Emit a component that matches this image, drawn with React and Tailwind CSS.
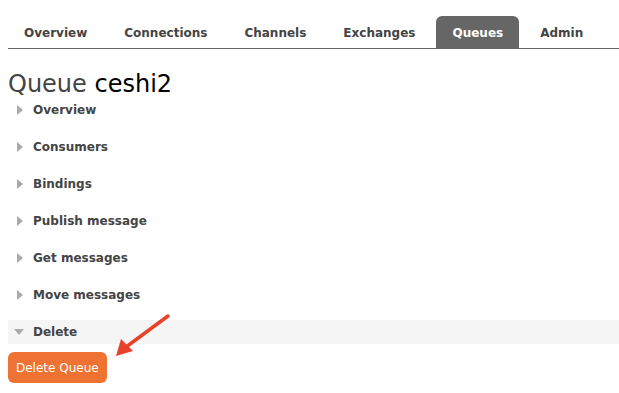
const tabs = ["Overview", "Connections", "Channels", "Exchanges", "Queues", "Admin"];
const sections = ["Overview", "Consumers", "Bindings", "Publish message", "Get messages", "Move messages"];

const App = () => {
  return (
    <div className="w-[619px] h-[393px] bg-white relative overflow-hidden font-['DejaVu_Sans',sans-serif] text-[#444]">
      <div className="ml-2 mt-4 flex gap-[5px] border-b border-[#666]">
        {tabs.map((t) => (
          <div
            key={t}
            className={
              t === "Queues"
                ? "h-8 px-4 pt-px flex items-center rounded-t-md bg-[#666] text-white text-[12px] font-bold"
                : "h-8 px-4 pt-px flex items-center text-[12px] font-bold"
            }
          >
            {t}
          </div>
        ))}
      </div>

      <h1 className="ml-2 mt-[20px] text-[24px] leading-[30px] text-[#444]">
        Queue <span className="text-black">ceshi2</span>
      </h1>

      <div className="ml-2 flex flex-col gap-[13px] -mt-px">
        {sections.map((s) => (
          <div key={s} className="h-6 flex items-center text-[12px] font-bold">
            <span className="ml-[9px] w-0 h-0 border-y-[5px] border-y-transparent border-l-[6px] border-l-[#aaa]" />
            <span className="ml-[10px]">{s}</span>
          </div>
        ))}
        <div className="h-6 flex items-center bg-[#f5f5f5] text-[12px] font-bold">
          <span className="ml-[6px] w-0 h-0 border-x-[5px] border-x-transparent border-t-[6px] border-t-[#aaa]" />
          <span className="ml-[9px]">Delete</span>
        </div>
      </div>

      <button className="ml-2 mt-2 h-[31px] px-2 rounded-md bg-[#ee7232] text-white text-[12px]">
        Delete Queue
      </button>

      <svg className="absolute left-0 top-0" width="619" height="393">
        <line x1="168" y1="316" x2="126" y2="347" stroke="#e8432a" strokeWidth="3.5" strokeLinecap="round" />
        <polygon points="116,356 121,339 133,351" fill="#e8432a" />
      </svg>
    </div>
  );
};

export default App;
